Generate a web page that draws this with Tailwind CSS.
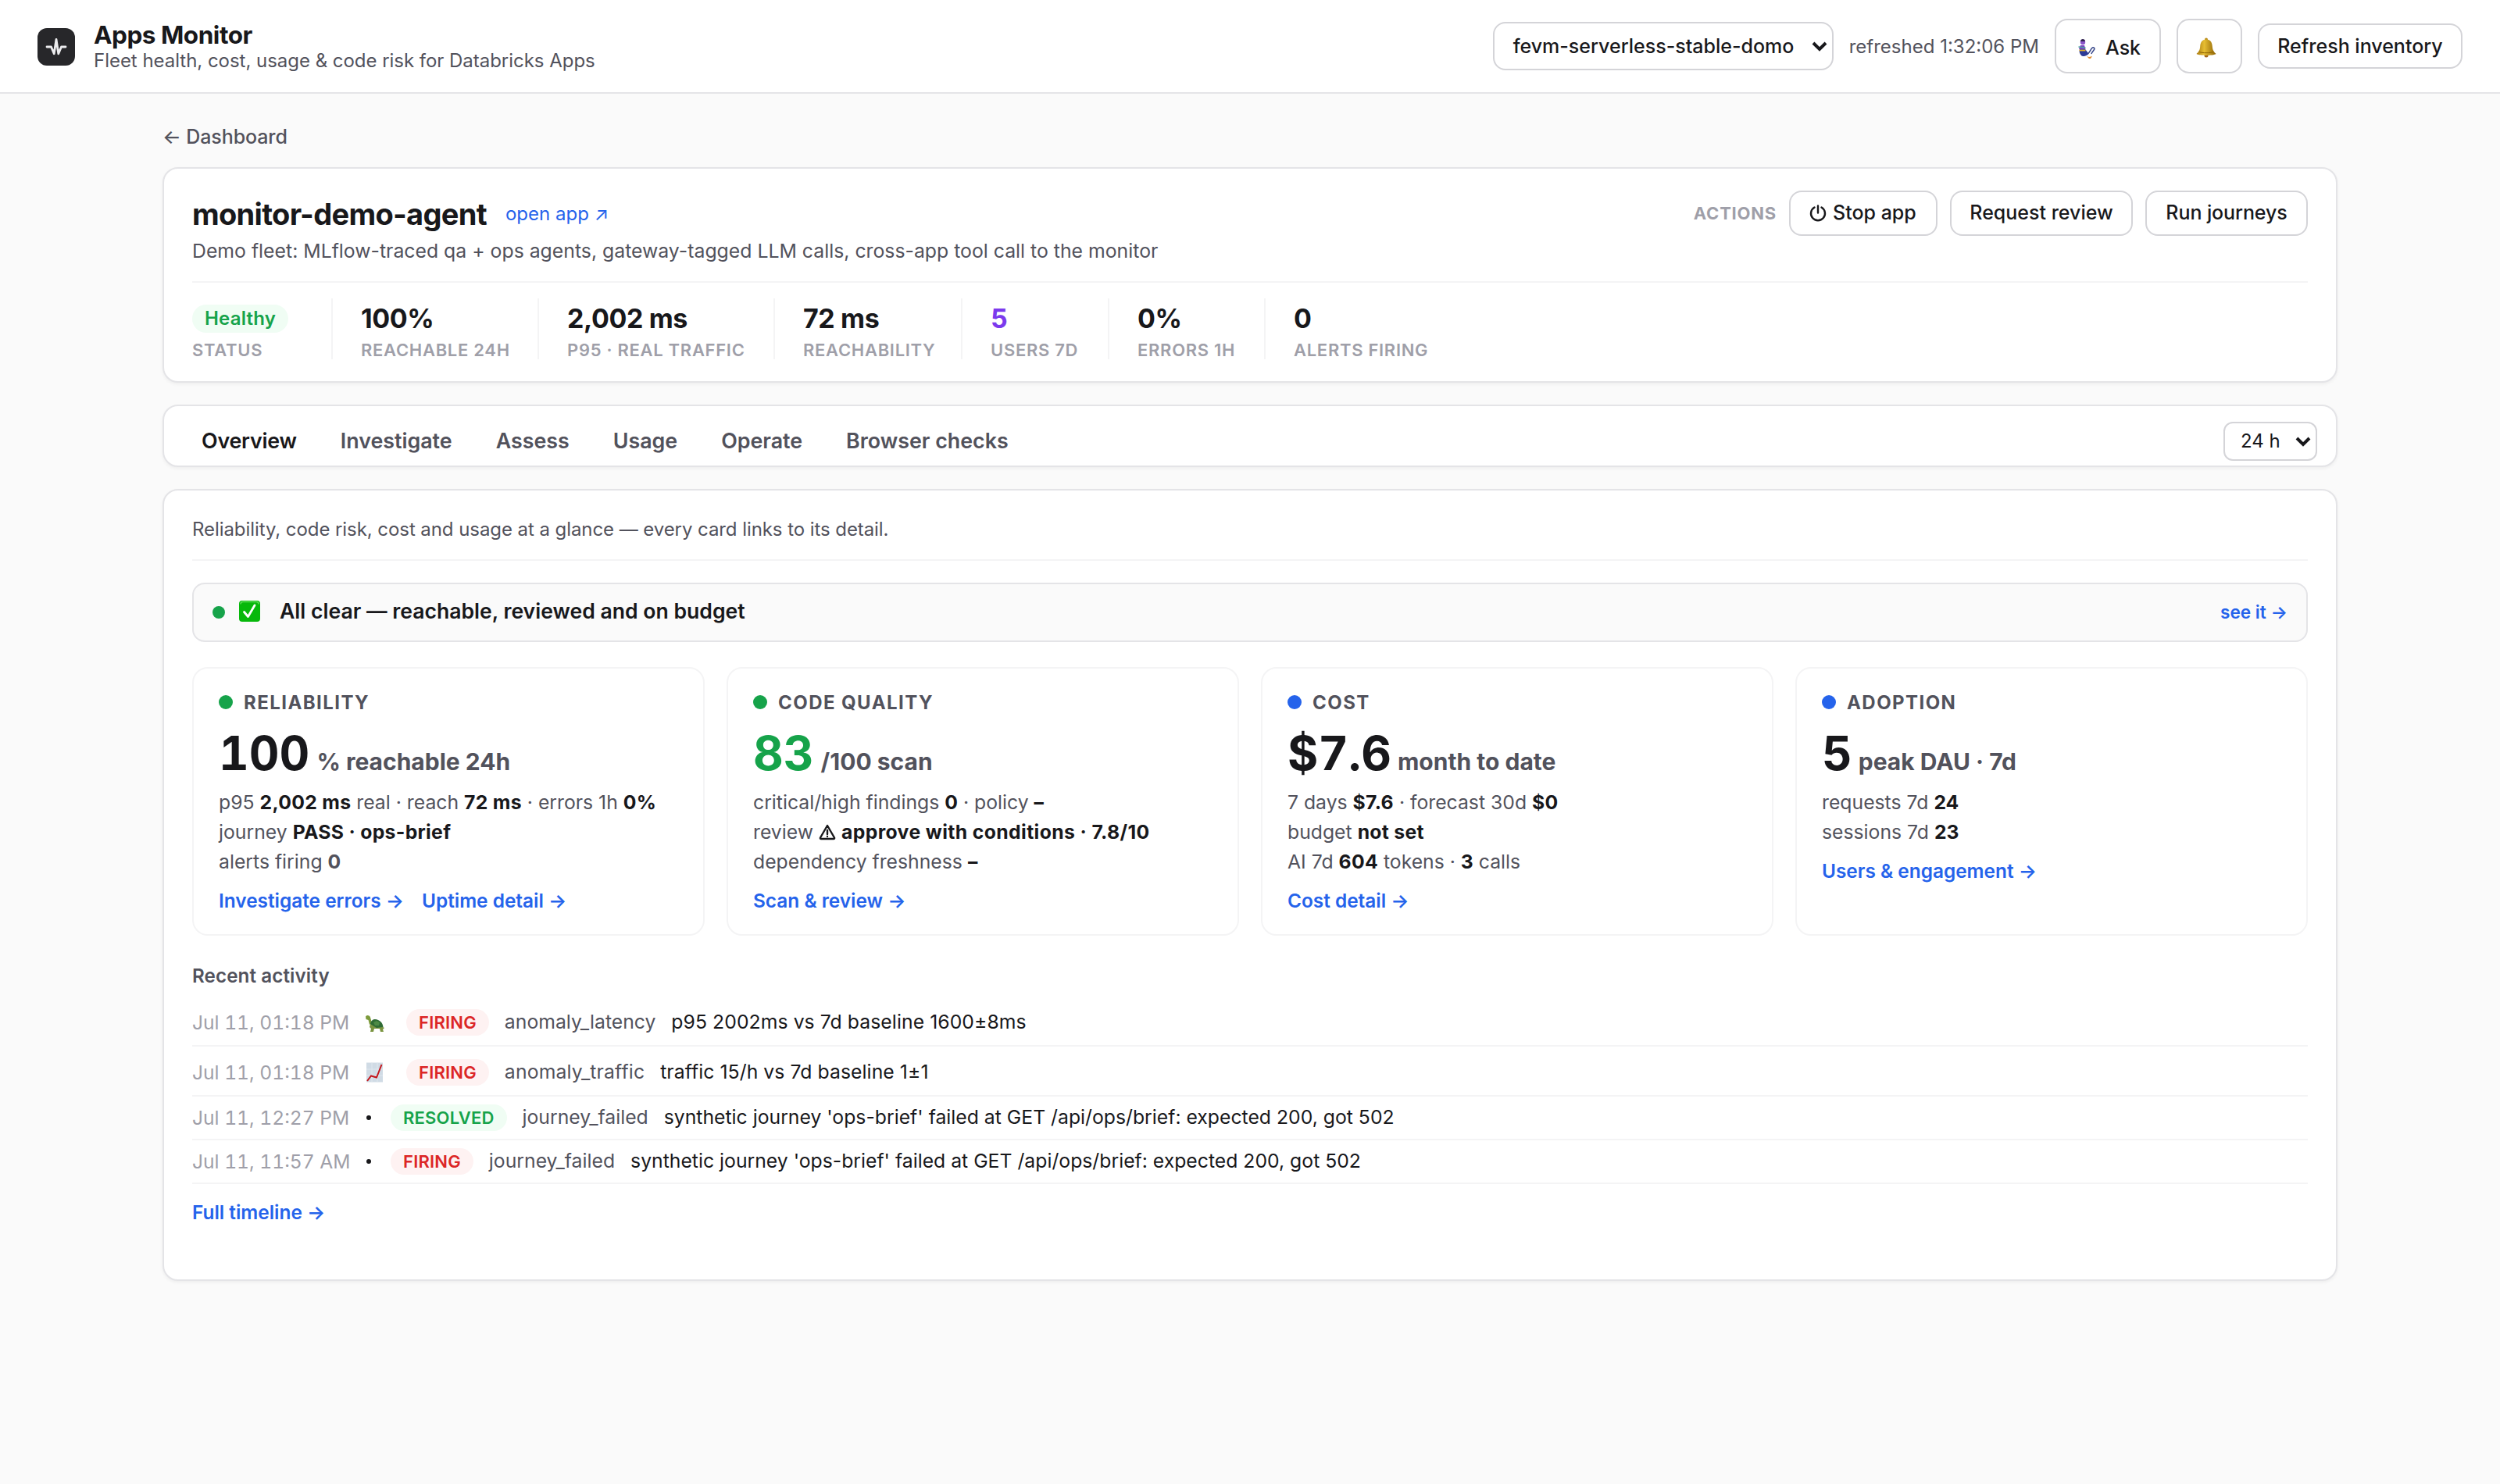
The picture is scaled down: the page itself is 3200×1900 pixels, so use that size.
<!DOCTYPE html>
<html lang="en">
<head>
    <meta charset="UTF-8">
    <title>Apps Monitor</title>
    <script src="https://cdn.jsdelivr.net/npm/@tailwindcss/browser@4"></script>
    <meta name="viewport" content="width=device-width, initial-scale=1.0">
</head>
<body class="min-h-screen bg-[#fafafa] font-['Inter','Noto_Sans',sans-serif] text-zinc-900">
    <header class="flex h-[120px] items-center justify-between border-b-2 border-[#e4e4e7] bg-white px-12">
        <div class="flex items-center gap-6">
            <svg class="mt-0.5 size-12" viewBox="0 0 48 48" fill="none">
                <rect width="48" height="48" rx="12" fill="#27272a"/>
                <path d="M12 24h5.500l3.700 8.800L24 14.500l2.800 18.300 3.700-8.800H36" stroke="#ececee" stroke-width="2.800" stroke-linecap="round" stroke-linejoin="round"/>
            </svg>
            <div>
                <h1 class="text-[31.5px] leading-[38px] font-bold tracking-[-0.015em]">Apps Monitor</h1>
                <p class="text-[24px] leading-[28px] tracking-[-0.03px] text-zinc-600">Fleet health, cost, usage &amp; code risk for Databricks Apps</p>
            </div>
        </div>
        <div class="flex items-center gap-5">
            <div class="flex h-[62px] w-[436px] items-center justify-between rounded-2xl border-2 border-zinc-300 bg-white pt-px pr-1 pl-6 text-[25px] font-medium">
                fevm-serverless-stable-domo
                <svg class="mb-px h-4 w-6" viewBox="0 0 24 16" fill="none"><path d="M4 4l8 8 8-8" stroke="#18181b" stroke-width="4"/></svg>
            </div>
            <span class="pt-px text-[24px] text-zinc-600">refreshed 1:32:06 PM</span>
            <button class="flex h-[70px] w-[136px] items-center rounded-2xl border-2 border-zinc-300 bg-white pt-[5px] pl-6 text-[25px] font-medium">
                <!-- genie -->
                <svg class="mr-[7px] h-8 w-8" viewBox="0 0 32 32" fill="none">
                    <path d="M15 24c4-1 6-11 9-9s-2 4-3 8" stroke="#3b4a8c" stroke-width="1.600"/>
                    <path d="M6 17h7l4 5c-1 4-7 5-9 3s-3-5-2-8z" fill="#2c3a97"/>
                    <path d="M5 17l2-5h5l1.500 5z" fill="#7a3fc0"/>
                    <circle cx="10" cy="8" r="3.200" fill="#8a54c8"/>
                    <path d="M7 7c0-4 6-4 6 0z" fill="#2e1f4d"/>
                    <path d="M4.500 14l9 1" stroke="#4ba3a0" stroke-width="1.600"/>
                    <path d="M5.500 18.500h8" stroke="#e9b32c" stroke-width="1.800"/>
                    <path d="M15 26l3 1 4-1-2 3h-2z" fill="#e08a2c"/>
                </svg>
                Ask
            </button>
            <button class="flex h-[70px] w-[84px] items-center rounded-2xl border-2 border-zinc-300 bg-white pt-1 pl-[22px]">
                <!-- bell -->
                <svg class="h-[26px] w-[28px]" viewBox="0 0 28 26">
                    <defs>
                        <linearGradient id="bell" x1="0" x2="1" y1="0" y2="0">
                            <stop offset="0" stop-color="#a97a10"/>
                            <stop offset=".4" stop-color="#e6bd32"/>
                            <stop offset="1" stop-color="#8d6205"/>
                        </linearGradient>
                    </defs>
                    <circle cx="14" cy="2.500" r="2" fill="#b88a18"/>
                    <circle cx="14" cy="23" r="2.500" fill="#a3651a"/>
                    <path d="M14 2.500c6 0 7.500 4.500 7.800 9 .3 4.500 1.700 6.500 4.700 9.500-4 2.500-21 2.500-25 0 3-3 4.400-5 4.700-9.500.3-4.500 1.800-9 7.800-9z" fill="url(#bell)"/>
                    <path d="M5 18.500c4 1.600 14 1.600 18 0" stroke="#8d6205" stroke-width="1" fill="none"/>
                </svg>
            </button>
            <button class="h-[58px] w-[262px] rounded-2xl border-2 border-zinc-300 bg-white pt-px text-[25px] font-medium">Refresh inventory</button>
        </div>
    </header>

    <main class="mx-auto w-[2784px] pt-10">
        <a href="#" class="mb-6 block text-[25px] leading-[30px] font-medium tracking-[-0.1px] text-zinc-600">← Dashboard</a>

        <section class="rounded-[20px] border-2 border-[#e4e4e7] bg-white px-9 py-7 shadow-[0_2px_4px_rgba(0,0,0,0.05)]">
            <div class="flex h-[58px] items-center justify-between">
                <div class="flex items-center gap-6">
                    <h2 class="pt-0.5 text-[38px] font-bold tracking-[-0.018em]">monitor-demo-agent</h2>
                    <a href="#" class="pt-px text-[24px] text-[#2563eb]">open app ↗</a>
                </div>
                <div class="flex items-center gap-4">
                    <span class="pt-px text-[22px] font-bold tracking-[0.035em] text-zinc-400">ACTIONS</span>
                    <button class="flex h-[58px] w-[190px] items-center gap-2 rounded-2xl border-2 border-zinc-300 bg-white pl-6 text-[25px] font-medium">
                        <svg class="size-[22px]" viewBox="0 0 22 22" fill="none" stroke="#18181b" stroke-width="2.400" stroke-linecap="round"><path d="M11 1.500v9M6.500 3.500a9 9 0 1 0 9 0"/></svg>
                        Stop app
                    </button>
                    <button class="h-[58px] w-[234px] rounded-2xl border-2 border-zinc-300 bg-white text-[25px] font-medium">Request review</button>
                    <button class="h-[58px] w-[208px] rounded-2xl border-2 border-zinc-300 bg-white text-[25px] font-medium tracking-[-0.1px]">Run journeys</button>
                </div>
            </div>
            <p class="pt-px text-[24.8px] leading-[36px] text-zinc-600">Demo fleet: MLflow-traced qa + ops agents, gateway-tagged LLM calls, cross-app tool call to the monitor</p>

            <div class="mt-[21px] flex border-t-2 border-zinc-100 pt-5 text-[34px] leading-[40px] font-bold tracking-[-0.012em]">
                <div class="w-[180px] border-r-2 border-zinc-100 pt-1.5">
                    <div class="flex h-10 items-center"><span class="rounded-full bg-green-50 px-4 text-[24px] leading-[36px] font-semibold tracking-[0.2px] text-[#16a34a]">Healthy</span></div>
                    <div class="mt-2 text-[22px] leading-[24px] font-semibold tracking-[0.032em] text-zinc-400">STATUS</div>
                </div>
                <div class="w-[264px] border-r-2 border-zinc-100 pt-1.5 pl-9">
                    <div>100%</div>
                    <div class="mt-2 text-[22px] leading-[24px] font-semibold tracking-[0.032em] text-zinc-400">REACHABLE 24H</div>
                </div>
                <div class="w-[302px] border-r-2 border-zinc-100 pt-1.5 pl-9">
                    <div>2,002 ms</div>
                    <div class="mt-2 text-[22px] leading-[24px] font-semibold tracking-[0.032em] text-zinc-400">P95 · REAL TRAFFIC</div>
                </div>
                <div class="w-[240px] border-r-2 border-zinc-100 pt-1.5 pl-9">
                    <div>72 ms</div>
                    <div class="mt-2 text-[22px] leading-[24px] font-semibold tracking-[0.032em] text-zinc-400">REACHABILITY</div>
                </div>
                <div class="w-[188px] border-r-2 border-zinc-100 pt-1.5 pl-9">
                    <div class="text-[#7c3aed]">5</div>
                    <div class="mt-2 text-[22px] leading-[24px] font-semibold tracking-[0.032em] text-zinc-400">USERS 7D</div>
                </div>
                <div class="w-[200px] border-r-2 border-zinc-100 pt-1.5 pl-9">
                    <div>0%</div>
                    <div class="mt-2 text-[22px] leading-[24px] font-semibold tracking-[0.032em] text-zinc-400">ERRORS 1H</div>
                </div>
                <div class="pt-1.5 pl-9">
                    <div>0</div>
                    <div class="mt-2 text-[22px] leading-[24px] font-semibold tracking-[0.032em] text-zinc-400">ALERTS FIRING</div>
                </div>
            </div>
        </section>

        <section class="mt-7 flex h-20 items-center justify-between rounded-[20px] border-2 border-[#e4e4e7] bg-white pt-[14px] pr-6 pl-12 shadow-[0_2px_4px_rgba(0,0,0,0.05)]">
            <nav class="flex gap-[56px] pb-0.5 text-[26.8px] font-semibold text-zinc-600">
                <a href="#" class="tracking-[-0.2px] text-zinc-900">Overview</a>
                <a href="#">Investigate</a>
                <a href="#">Assess</a>
                <a href="#">Usage</a>
                <a href="#">Operate</a>
                <a href="#">Browser checks</a>
            </nav>
            <div class="flex h-[50px] w-[120px] items-center justify-between rounded-xl border-2 border-zinc-300 bg-white pr-1 pl-5 text-[24px]">
                24 h
                <svg class="h-4 w-6" viewBox="0 0 24 16" fill="none"><path d="M4 4l8 8 8-8" stroke="#18181b" stroke-width="4"/></svg>
            </div>
        </section>

        <section class="mt-7 h-[1014px] rounded-[20px] border-2 border-[#e4e4e7] bg-white px-9 pt-8 shadow-[0_2px_4px_rgba(0,0,0,0.05)]">
            <p class="border-b-2 border-zinc-100 pb-5 text-[24px] leading-[36px] tracking-[-0.07px] text-zinc-600">Reliability, code risk, cost and usage at a glance — every card links to its detail.</p>

            <div class="mt-7 flex h-[76px] items-center rounded-2xl border-2 border-[#e4e4e7] bg-[#fafafa] px-6">
                <span class="size-4 rounded-full bg-[#16a34a]"></span>
                <svg class="mr-[25px] mb-1 ml-[18px] size-[27px]" viewBox="0 0 27 27" fill="none">
                    <rect width="27" height="27" rx="4" fill="#07b80b"/>
                    <path d="M2 4.500q0-3 3-3h17q3 0 3 3" stroke="#5ddc55" stroke-width="1.500"/>
                    <path d="M6.500 14.500l5 6L20 6" stroke="#fff" stroke-width="2.800" stroke-linecap="round" stroke-linejoin="round"/>
                </svg>
                <span class="mb-[2px] text-[26.6px] font-semibold">All clear — reachable, reviewed and on budget</span>
                <a href="#" class="ml-auto text-[22.6px] font-semibold text-[#2563eb]">see it →</a>
            </div>

            <div class="mt-8 grid h-[344px] grid-cols-4 gap-7 text-[24.75px] leading-[38px] text-zinc-600">
                <div class="rounded-[20px] border-2 border-zinc-100 px-8 pt-7">
                    <div class="flex items-center gap-[14px] text-[24px] leading-[32px] font-bold tracking-[0.06em]"><span class="mb-0.5 size-[18px] rounded-full bg-[#16a34a]"></span>RELIABILITY</div>
                    <div class="mt-[18px] mb-[14px] h-[60px] text-[30px] leading-[60px] font-bold"><span class="mr-[9px] text-[60px] tabular-nums text-zinc-900">100</span>% reachable 24h</div>
                    <div>p95 <b class="tracking-[0.3px] text-zinc-900">2,002 ms</b> real · reach <b class="tracking-[0.3px] text-zinc-900">72 ms</b> · errors 1h <b class="tracking-[0.3px] text-zinc-900">0%</b></div>
                    <div>journey <b class="tracking-[0.3px] text-zinc-900">PASS · ops-brief</b></div>
                    <div>alerts firing <b>0</b></div>
                    <div class="mt-[15px] flex gap-[23px] text-[24.4px] leading-[32px] font-semibold text-[#2563eb]"><a href="#">Investigate errors →</a><a href="#">Uptime detail →</a></div>
                </div>
                <div class="rounded-[20px] border-2 border-zinc-100 px-8 pt-7">
                    <div class="flex items-center gap-[14px] text-[24px] leading-[32px] font-bold tracking-[0.06em]"><span class="mb-0.5 size-[18px] rounded-full bg-[#16a34a]"></span>CODE QUALITY</div>
                    <div class="mt-[18px] mb-[14px] h-[60px] text-[30px] leading-[60px] font-bold"><span class="mr-[9px] text-[60px] tabular-nums text-[#16a34a]">83</span>/100 scan</div>
                    <div>critical/high findings <b class="text-zinc-900">0</b> · policy <b class="text-zinc-900">–</b></div>
                    <div>review
                        <svg class="mb-1 inline-block h-[21px] w-[22px]" viewBox="0 0 22 21" fill="none" stroke="#18181b" stroke-width="2.400" stroke-linecap="round" stroke-linejoin="round"><path d="M11 2 2 17.500q-.5 1.500 1 1.500h16q1.500 0 1-1.500zM11 8v5M11 16v.1"/></svg>
                        <b class="tracking-[0.38px] text-zinc-900">approve with conditions · 7.8/10</b></div>
                    <div>dependency freshness <b class="text-zinc-900">–</b></div>
                    <div class="mt-[15px] text-[24.4px] leading-[32px] font-semibold text-[#2563eb]"><a href="#">Scan &amp; review →</a></div>
                </div>
                <div class="rounded-[20px] border-2 border-zinc-100 px-8 pt-7">
                    <div class="flex items-center gap-[14px] text-[24px] leading-[32px] font-bold tracking-[0.06em]"><span class="mb-0.5 size-[18px] rounded-full bg-[#2563eb]"></span>COST</div>
                    <div class="mt-[18px] mb-[14px] h-[60px] text-[30px] leading-[60px] font-bold"><span class="mr-[8px] text-[60px] tabular-nums text-zinc-900">$7.6</span>month to date</div>
                    <div>7 days <b class="tracking-[0.3px] text-zinc-900">$7.6</b> · forecast 30d <b class="tracking-[0.3px] text-zinc-900">$0</b></div>
                    <div>budget <b class="tracking-[0.3px] text-zinc-900">not set</b></div>
                    <div>AI 7d <b class="tracking-[0.3px] text-zinc-900">604</b> tokens · <b class="text-zinc-900">3</b> calls</div>
                    <div class="mt-[15px] text-[24.4px] leading-[32px] font-semibold text-[#2563eb]"><a href="#">Cost detail →</a></div>
                </div>
                <div class="rounded-[20px] border-2 border-zinc-100 px-8 pt-7">
                    <div class="flex items-center gap-[14px] text-[24px] leading-[32px] font-bold tracking-[0.06em]"><span class="mb-0.5 size-[18px] rounded-full bg-[#2563eb]"></span>ADOPTION</div>
                    <div class="mt-[18px] mb-[14px] h-[60px] text-[30px] leading-[60px] font-bold"><span class="mr-[8px] text-[60px] tabular-nums text-zinc-900">5</span>peak DAU · 7d</div>
                    <div>requests 7d <b class="text-zinc-900">24</b></div>
                    <div>sessions 7d <b class="text-zinc-900">23</b></div>
                    <div class="mt-[15px] text-[24.4px] leading-[32px] font-semibold text-[#2563eb]"><a href="#">Users &amp; engagement →</a></div>
                </div>
            </div>

            <h3 class="mt-9 mb-[10px] text-[24.2px] leading-[32px] font-semibold tracking-[0.1px] text-zinc-600">Recent activity</h3>
            <div class="text-[24.75px]">
                <div class="flex h-16 items-center gap-5 border-b-2 border-zinc-100 pt-1">
                    <span class="w-[201px] text-[24.6px] whitespace-nowrap tabular-nums text-zinc-400">Jul 11, 01:18 PM</span>
                    <!-- turtle -->
                    <svg class="mt-1 h-6 w-[33px]" viewBox="0 0 33 24">
                        <path d="M1 2.500c1-2.500 5.500-2 6 1l2 7-3 2.500L4.500 7 1.500 6z" fill="#7d9b3c"/>
                        <path d="M7 12c1-6 6-7 10-5 4 1.500 6 5 6.500 9l-1 2H9z" fill="#2f6b34"/>
                        <path d="M11 10l4-2 4 2-1 4h-5z" fill="#4d8a45"/>
                        <path d="M7 12l-1 4 2 2-1 4h4l1-4h7l1 4h4l-1-3 2-2-2-1-8 1z" fill="#7a9440"/>
                    </svg>
                    <span class="rounded-full bg-red-50 px-4 text-[22px] leading-[34px] font-semibold tracking-[0.2px] text-[#dc2626]">FIRING</span>
                    <span class="text-zinc-600">anomaly_latency</span>
                    <span class="tracking-[0.06px]">p95 2002ms vs 7d baseline 1600±8ms</span>
                </div>
                <div class="flex h-16 items-center gap-5 border-b-2 border-zinc-100 pt-1">
                    <span class="w-[201px] text-[24.6px] whitespace-nowrap tabular-nums text-zinc-400">Jul 11, 01:18 PM</span>
                    <!-- chart -->
                    <svg class="h-[26px] w-[33px]" viewBox="0 0 33 26" fill="none">
                        <path d="M2 .5h21v25H2z" fill="#d0dbe5"/>
                        <path d="M2 9h21M2 17h21M9 .5v25M16 .5v25" stroke="#dfe7ee"/>
                        <path d="M3 24l5-6.500 7 2 3-7.500 3.500-9" stroke="#c4161c" stroke-width="2"/>
                    </svg>
                    <span class="rounded-full bg-red-50 px-4 text-[22px] leading-[34px] font-semibold tracking-[0.2px] text-[#dc2626]">FIRING</span>
                    <span class="tracking-[0.15px] text-zinc-600">anomaly_traffic</span>
                    <span class="tracking-[0.06px]">traffic 15/h vs 7d baseline 1±1</span>
                </div>
                <div class="flex h-14 items-center gap-5 border-b-2 border-zinc-100">
                    <span class="w-[201px] text-[24.6px] whitespace-nowrap tabular-nums text-zinc-400">Jul 11, 12:27 PM</span>
                    <span class="flex w-[13px] justify-center pr-1"><span class="size-[6px] rounded-full bg-zinc-900"></span></span>
                    <span class="rounded-full bg-green-50 px-4 text-[22px] leading-[34px] font-semibold tracking-[0.2px] text-[#16a34a]">RESOLVED</span>
                    <span class="text-zinc-600">journey_failed</span>
                    <span>synthetic journey 'ops-brief' failed at GET /api/ops/brief: expected 200, got 502</span>
                </div>
                <div class="flex h-14 items-center gap-5 border-b-2 border-zinc-100">
                    <span class="w-[201px] text-[24.6px] whitespace-nowrap tabular-nums text-zinc-400">Jul 11, 11:57 AM</span>
                    <span class="flex w-[13px] justify-center pr-1"><span class="size-[6px] rounded-full bg-zinc-900"></span></span>
                    <span class="rounded-full bg-red-50 px-4 text-[22px] leading-[34px] font-semibold tracking-[0.2px] text-[#dc2626]">FIRING</span>
                    <span class="text-zinc-600">journey_failed</span>
                    <span>synthetic journey 'ops-brief' failed at GET /api/ops/brief: expected 200, got 502</span>
                </div>
            </div>
            <a href="#" class="mt-5 block text-[24.4px] leading-[32px] font-semibold text-[#2563eb]">Full timeline →</a>
        </section>
    </main>
</body>
</html>
